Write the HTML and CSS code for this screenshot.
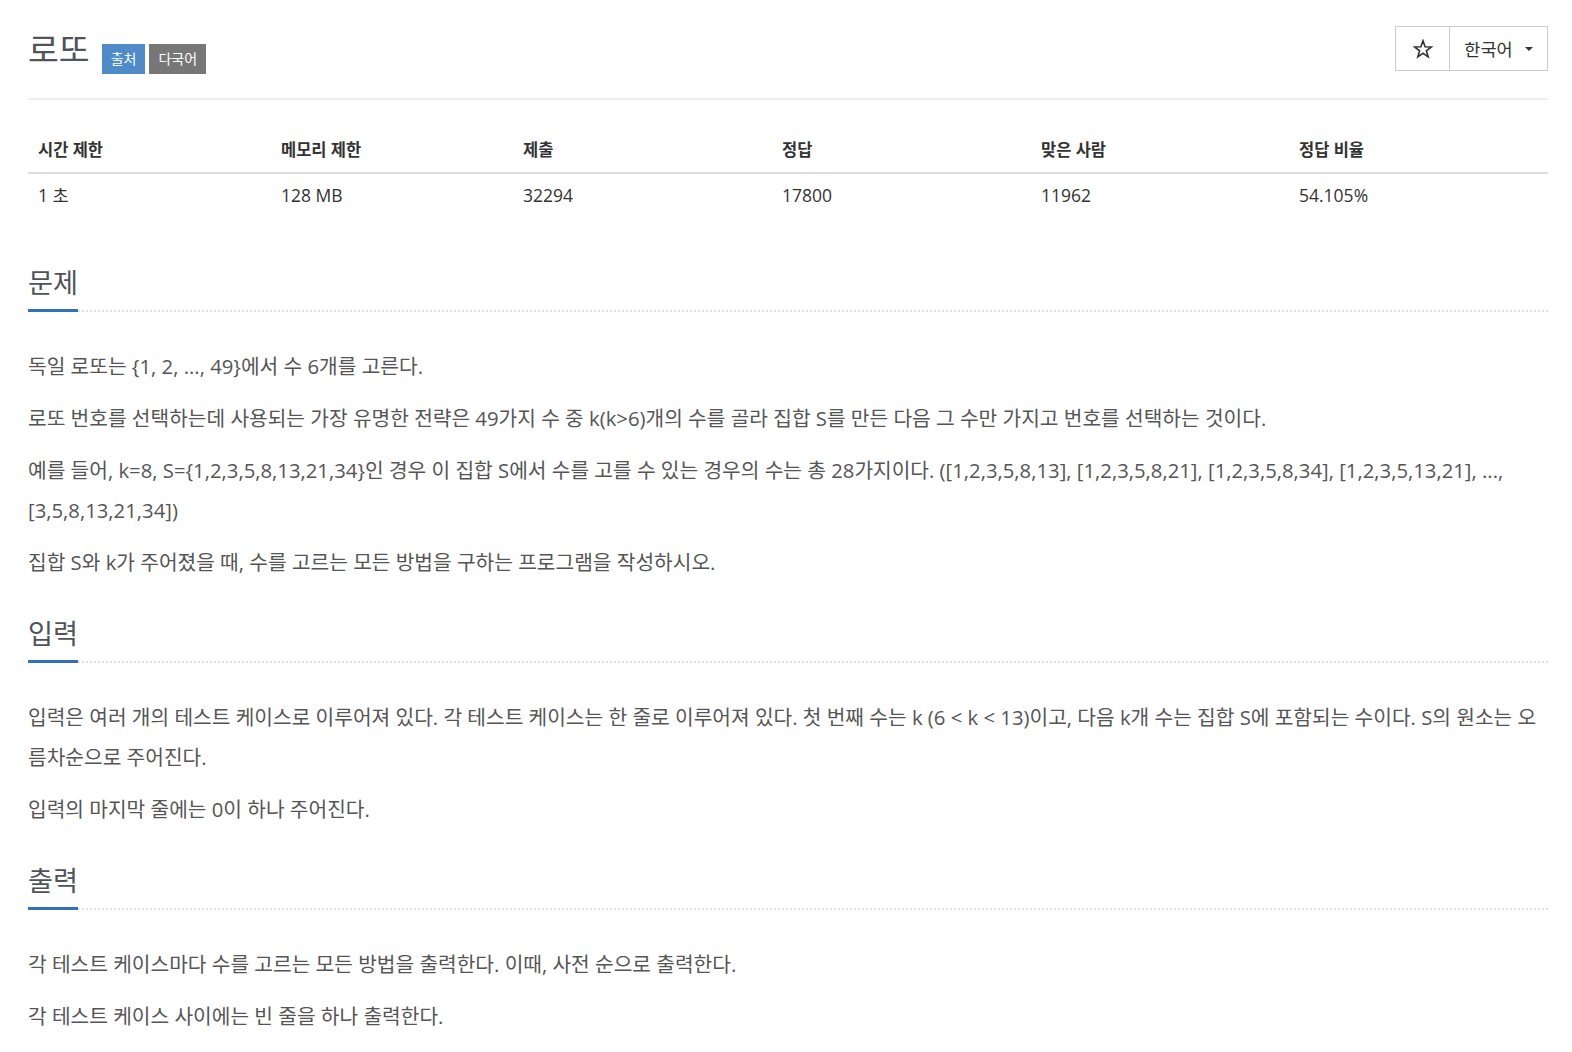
FILE: index.html
```html
<!DOCTYPE html>
<html lang="ko">
<head>
<meta charset="utf-8">
<title>로또</title>
<link rel="stylesheet" href="styles.css">
</head>
<body>
<div class="page">
  <div class="page-header">
    <div class="title-wrap">
      <h1 class="title">로또</h1>
      <span class="label label-blue">출처</span>
      <span class="label label-gray">다국어</span>
    </div>
    <div class="btn-group">
      <button class="btn btn-star" type="button" aria-label="star">
        <svg class="star" width="20" height="20" viewBox="0 0 20 20"><polygon points="10,1.8 12.1,7.7 18.4,7.9 13.4,11.8 15.2,17.9 10,14.3 4.8,17.9 6.6,11.8 1.6,7.9 7.9,7.7" fill="none" stroke="#333" stroke-width="1.6" stroke-linejoin="miter"/></svg>
      </button>
      <button class="btn btn-lang" type="button">한국어 <span class="caret"></span></button>
    </div>
  </div>

  <table class="info">
    <colgroup>
      <col class="c1"><col class="c2"><col class="c3"><col class="c4"><col class="c5"><col class="c6">
    </colgroup>
    <thead>
      <tr><th>시간 제한</th><th>메모리 제한</th><th>제출</th><th>정답</th><th>맞은 사람</th><th>정답 비율</th></tr>
    </thead>
    <tbody>
      <tr><td>1 초 </td><td>128 MB</td><td>32294</td><td>17800</td><td>11962</td><td>54.105%</td></tr>
    </tbody>
  </table>

  <section class="section first">
    <div class="headline"><h2>문제</h2><div class="fill"></div></div>
    <p>독일 로또는 {1, 2, ..., 49}에서 수 6개를 고른다.</p>
    <p>로또 번호를 선택하는데 사용되는 가장 유명한 전략은 49가지 수 중 k(k&gt;6)개의 수를 골라 집합 S를 만든 다음 그 수만 가지고 번호를 선택하는 것이다.</p>
    <p>예를 들어, k=8, S={1,2,3,5,8,13,21,34}인 경우 이 집합 S에서 수를 고를 수 있는 경우의 수는 총 28가지이다. ([1,2,3,5,8,13], [1,2,3,5,8,21], [1,2,3,5,8,34], [1,2,3,5,13,21], ..., [3,5,8,13,21,34])</p>
    <p>집합 S와 k가 주어졌을 때, 수를 고르는 모든 방법을 구하는 프로그램을 작성하시오.</p>
  </section>

  <section class="section">
    <div class="headline"><h2>입력</h2><div class="fill"></div></div>
    <p>입력은 여러 개의 테스트 케이스로 이루어져 있다. 각 테스트 케이스는 한 줄로 이루어져 있다. 첫 번째 수는 k (6 &lt; k &lt; 13)이고, 다음 k개 수는 집합 S에 포함되는 수이다. S의 원소는 오름차순으로 주어진다.</p>
    <p>입력의 마지막 줄에는 0이 하나 주어진다.</p>
  </section>

  <section class="section">
    <div class="headline"><h2>출력</h2><div class="fill"></div></div>
    <p>각 테스트 케이스마다 수를 고르는 모든 방법을 출력한다. 이때, 사전 순으로 출력한다.</p>
    <p>각 테스트 케이스 사이에는 빈 줄을 하나 출력한다.</p>
  </section>
</div>
</body>
</html>
```

FILE: styles.css
```css
* { box-sizing: border-box; }

html, body {
  margin: 0;
  padding: 0;
  background: #fff;
}

body {
  font-family: "Open Sans", "Noto Sans CJK KR", sans-serif;
  color: #555;
}

.page {
  padding: 0 24px 0 28px;
}

.page-header {
  display: flex;
  justify-content: space-between;
  align-items: flex-start;
  padding-top: 26px;
  height: 100px;
  border-bottom: 2px solid #eee;
}

.title-wrap {
  display: flex;
  align-items: flex-start;
}

.title {
  margin: 3px 0 0 0;
  font-size: 33.5px;
  line-height: 40px;
  font-weight: normal;
  color: #4f535a;
}

.label {
  display: inline-block;
  margin-top: 18px;
  height: 30px;
  line-height: 30px;
  padding: 0 9px;
  font-size: 14px;
  color: #fff;
}

.label-blue {
  background: #4f8bc8;
  margin-left: 12px;
}

.label-gray {
  background: #777;
  margin-left: 4px;
}

.btn-group {
  display: flex;
  height: 45px;
}

.btn {
  font-family: "Open Sans", "Noto Sans CJK KR", sans-serif;
  background: #fff;
  border: 1px solid #ccc;
  color: #333;
  height: 45px;
  margin: 0;
  padding: 0;
  display: flex;
  align-items: center;
  justify-content: center;
}

.btn-star {
  width: 55px;
}

.star {
  display: block;
}

.btn-lang {
  width: 99px;
  margin-left: -1px;
  font-size: 17.5px;
  gap: 12px;
}

.caret {
  display: inline-block;
  width: 0;
  height: 0;
  border-top: 4px solid #333;
  border-left: 4px solid transparent;
  border-right: 4px solid transparent;
}

.info {
  width: 1520px;
  margin-top: 29px;
  border-collapse: collapse;
  table-layout: fixed;
  color: #333;
  font-size: 17.5px;
}

.c1 { width: 243px; }
.c2 { width: 242px; }
.c3 { width: 259px; }
.c4 { width: 259px; }
.c5 { width: 258px; }
.c6 { width: 259px; }

.info th {
  text-align: left;
  font-weight: bold;
  font-size: 16.5px;
  padding: 9px 10px 10px;
  line-height: 24px;
  border-bottom: 2px solid #ddd;
}

.info td {
  padding: 9px 10px;
  line-height: 24px;
}

.section {
  margin-bottom: 34px;
}

.section.first {
  margin-top: 49px;
}

.headline {
  display: flex;
  align-items: flex-end;
  margin-bottom: 34px;
}

.headline h2 {
  margin: 0;
  font-size: 27.2px;
  line-height: 36px;
  font-weight: normal;
  color: #4f535a;
  padding-bottom: 8px;
  border-bottom: 3px solid #2f72b9;
}

.headline .fill {
  flex: 1;
  border-bottom: 2px dotted #e0e0e0;
  margin-bottom: 0.5px;
}

.section p {
  margin: 0 0 12px 0;
  font-size: 20.3px;
  line-height: 40px;
  color: #555;
}
```
